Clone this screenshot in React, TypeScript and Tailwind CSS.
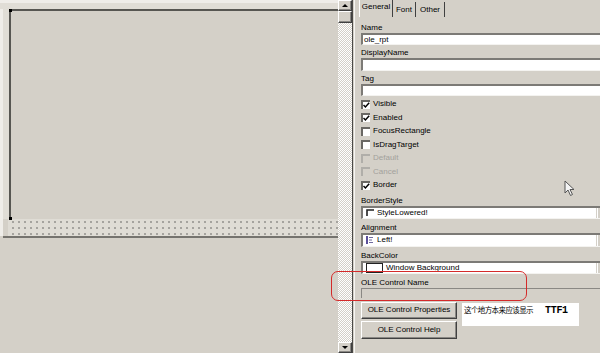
import React from "react";

const sunken =
  "border-t-2 border-l-2 border-b border-t-[#7c7a76] border-l-[#7c7a76] border-b-[#f4f3f0] bg-white";
const raised =
  "border border-t-white border-l-white border-b-[#404040] border-r-[#404040] shadow-[inset_-1px_-1px_0_#8a8884] bg-[#d4d0c8]";

const Label = ({ text, h }: { text: string; h: string }) => (
  <div className={`flex items-end pb-[1px] ${h}`}>
    <span className="leading-none">{text}</span>
  </div>
);

const Check = ({ label, checked, disabled }: { label: string; checked?: boolean; disabled?: boolean }) => (
  <div className="flex h-[13.5px] items-center gap-[3px]">
    <div
      className={`flex h-[9px] w-[9px] items-center justify-center border-t-2 border-l-2 ${
        disabled ? "border-[#b0aea9] bg-[#d4d0c8]" : "border-[#6a6864] bg-white"
      }`}
    >
      {checked ? (
        <svg width="7" height="7" viewBox="0 0 7 7">
          <path d="M0.5 3 L2.4 5 L6.2 0.8" stroke="#000" strokeWidth="1.5" fill="none" />
        </svg>
      ) : null}
    </div>
    <span className={`leading-none ${disabled ? "text-[#a3a19c]" : "text-black"}`}>{label}</span>
  </div>
);

const Dropdown = ({ icon, text, h }: { icon: React.ReactNode; text: string; h: string }) => (
  <div className={`flex ${h} ${sunken}`}>
    <div className="flex flex-1 items-center gap-[3px] pl-[3px]">
      {icon}
      <span className="leading-none">{text}</span>
    </div>
    <div className="w-[4px] border-l border-[#d4d0c8] bg-[#d4d0c8] shadow-[inset_1px_0_0_#fff]" />
  </div>
);

export default function App() {
  return (
    <div className="relative flex h-[353px] w-[600px] overflow-hidden bg-[#d4d0c8] font-['Liberation_Sans',Arial,sans-serif] text-[8px] text-black">
      {/* report canvas */}
      <div className="flex w-[338px] flex-col">
        <div className="h-[9px] border-t-[3px] border-[#efede9] bg-[#e0ddd6]" />
        <div className="flex flex-col border-l-[3px] border-[#efede9]">
          <div className="flex h-[210px]">
            <div className="w-[6px] bg-[#e0ddd6]" />
            <div className="relative flex-1 border-l-2 border-t-2 border-[#575652]">
              <div className="absolute -left-[2px] -top-[2px] h-[3px] w-[3px] bg-black" />
              <div className="absolute -bottom-[1px] -left-[2px] h-[3px] w-[3px] bg-black" />
            </div>
          </div>
          <div className="ml-[5px] h-[17px] bg-[#dfdcd5] bg-[radial-gradient(circle,#a3a19c_0.7px,transparent_0.9px)] bg-[length:6px_6px] bg-[position:2px_0px]" />
        </div>
        <div className="ml-[3px] h-[2px] bg-[#75736e]" />
        <div className="flex-1" />
      </div>

      {/* vertical scrollbar */}
      <div className="flex w-[14px] flex-col">
        <div className={`flex h-[11px] items-center justify-center ${raised}`}>
          <div className="h-0 w-0 border-x-[3px] border-b-[3px] border-x-transparent border-b-black" />
        </div>
        <div className={`h-[12px] ${raised}`} />
        <div className="flex-1 bg-[#d4d0c8] bg-[repeating-conic-gradient(#ffffff_0%_25%,#d4d0c8_0%_50%)] bg-[length:2px_2px]" />
        <div className={`flex h-[11px] items-center justify-center ${raised}`}>
          <div className="h-0 w-0 border-x-[3px] border-t-[3px] border-x-transparent border-t-black" />
        </div>
      </div>

      {/* splitter */}
      <div className="w-[1px] bg-[#4a4946]" />
      <div className="w-[1px] bg-[#d4d0c8]" />
      <div className="w-[1px] bg-[#f6f5f2]" />

      {/* property panel */}
      <div className="flex flex-1 flex-col pl-[4px]">
        <div className="flex h-[17px] items-end">
          <div className="flex h-[17px] w-[34px] items-center justify-center border-l border-r border-l-white border-r-[#404040] pb-[4px]">
            General
          </div>
          <div className="flex h-[15px] w-[23px] items-center justify-center border-r border-r-[#404040]">Font</div>
          <div className="flex h-[15px] w-[29px] items-center justify-center border-r border-r-[#404040]">Other</div>
        </div>

        <div className="flex flex-col pl-[2px]">
          <Label text="Name" h="h-[16px]" />
          <div className={`flex h-[12px] items-center pl-[1px] ${sunken}`}>
            <span className="leading-none">ole_rpt</span>
          </div>
          <Label text="DisplayName" h="h-[13px]" />
          <div className={`h-[13px] ${sunken}`} />
          <Label text="Tag" h="h-[13px]" />
          <div className={`h-[12px] ${sunken}`} />

          <div className="mt-[1.5px] flex flex-col">
            <Check label="Visible" checked />
            <Check label="Enabled" checked />
            <Check label="FocusRectangle" />
            <Check label="IsDragTarget" />
            <Check label="Default" disabled />
            <Check label="Cancel" disabled />
            <Check label="Border" checked />
          </div>

          <Label text="BorderStyle" h="h-[13.5px]" />
          <Dropdown
            h="h-[13px]"
            text="StyleLowered!"
            icon={
              <svg width="8" height="7" viewBox="0 0 8 7">
                <path d="M1 7 V1 H8" stroke="#222" strokeWidth="1.6" fill="none" />
              </svg>
            }
          />
          <Label text="Alignment" h="h-[14px]" />
          <Dropdown
            h="h-[14px]"
            text="Left!"
            icon={
              <svg width="8" height="8" viewBox="0 0 8 8">
                <rect x="0" y="0" width="2" height="8" fill="#5a4f9a" />
                <path d="M3 1.5 H7 M3 4 H6 M3 6.5 H7" stroke="#6f6a9e" strokeWidth="1" />
              </svg>
            }
          />
          <Label text="BackColor" h="h-[14px]" />
          <Dropdown
            h="h-[13px]"
            text="Window Background"
            icon={<div className="h-[10px] w-[17px] border border-[#222] bg-white" />}
          />
          <Label text="OLE Control Name" h="h-[14px]" />
          <div className="h-[10px] border-t border-l border-[#8a8884] bg-[#d4d0c8]" />

          <div className="mt-[4px] flex gap-[5px]">
            <div className="flex w-[96px] flex-col gap-[2px]">
              <div className={`flex h-[17px] items-center justify-center ${raised}`}>OLE Control Properties</div>
              <div className={`flex h-[18px] items-center justify-center ${raised}`}>OLE Control Help</div>
            </div>
            <div className="mt-[1px] flex h-[23px] w-[117px] items-baseline bg-white pl-[2px] pt-[3px] leading-none">
              <span className="font-['Noto_Sans_CJK_SC',sans-serif] text-[7.5px] tracking-[-0.6px]">这个地方本来应该显示</span>
              <span className="ml-[12px] font-['Liberation_Mono',monospace] text-[10px] font-bold tracking-[-0.3px]">TTF1</span>
            </div>
          </div>
        </div>
      </div>

      {/* annotation */}
      <div className="absolute left-[331px] top-[271px] h-[30px] w-[196px] rounded-[7px] border-[1.5px] border-[#d42a2a]" />

      {/* mouse cursor */}
      <svg className="absolute left-[564px] top-[180px]" width="11" height="17" viewBox="0 0 11 17">
        <path d="M1 1 V13 L4 10 L6.5 15.5 L8.5 14.5 L6 9.5 H10 Z" fill="#f4f4f4" stroke="#555" strokeWidth="1" />
      </svg>
    </div>
  );
}
